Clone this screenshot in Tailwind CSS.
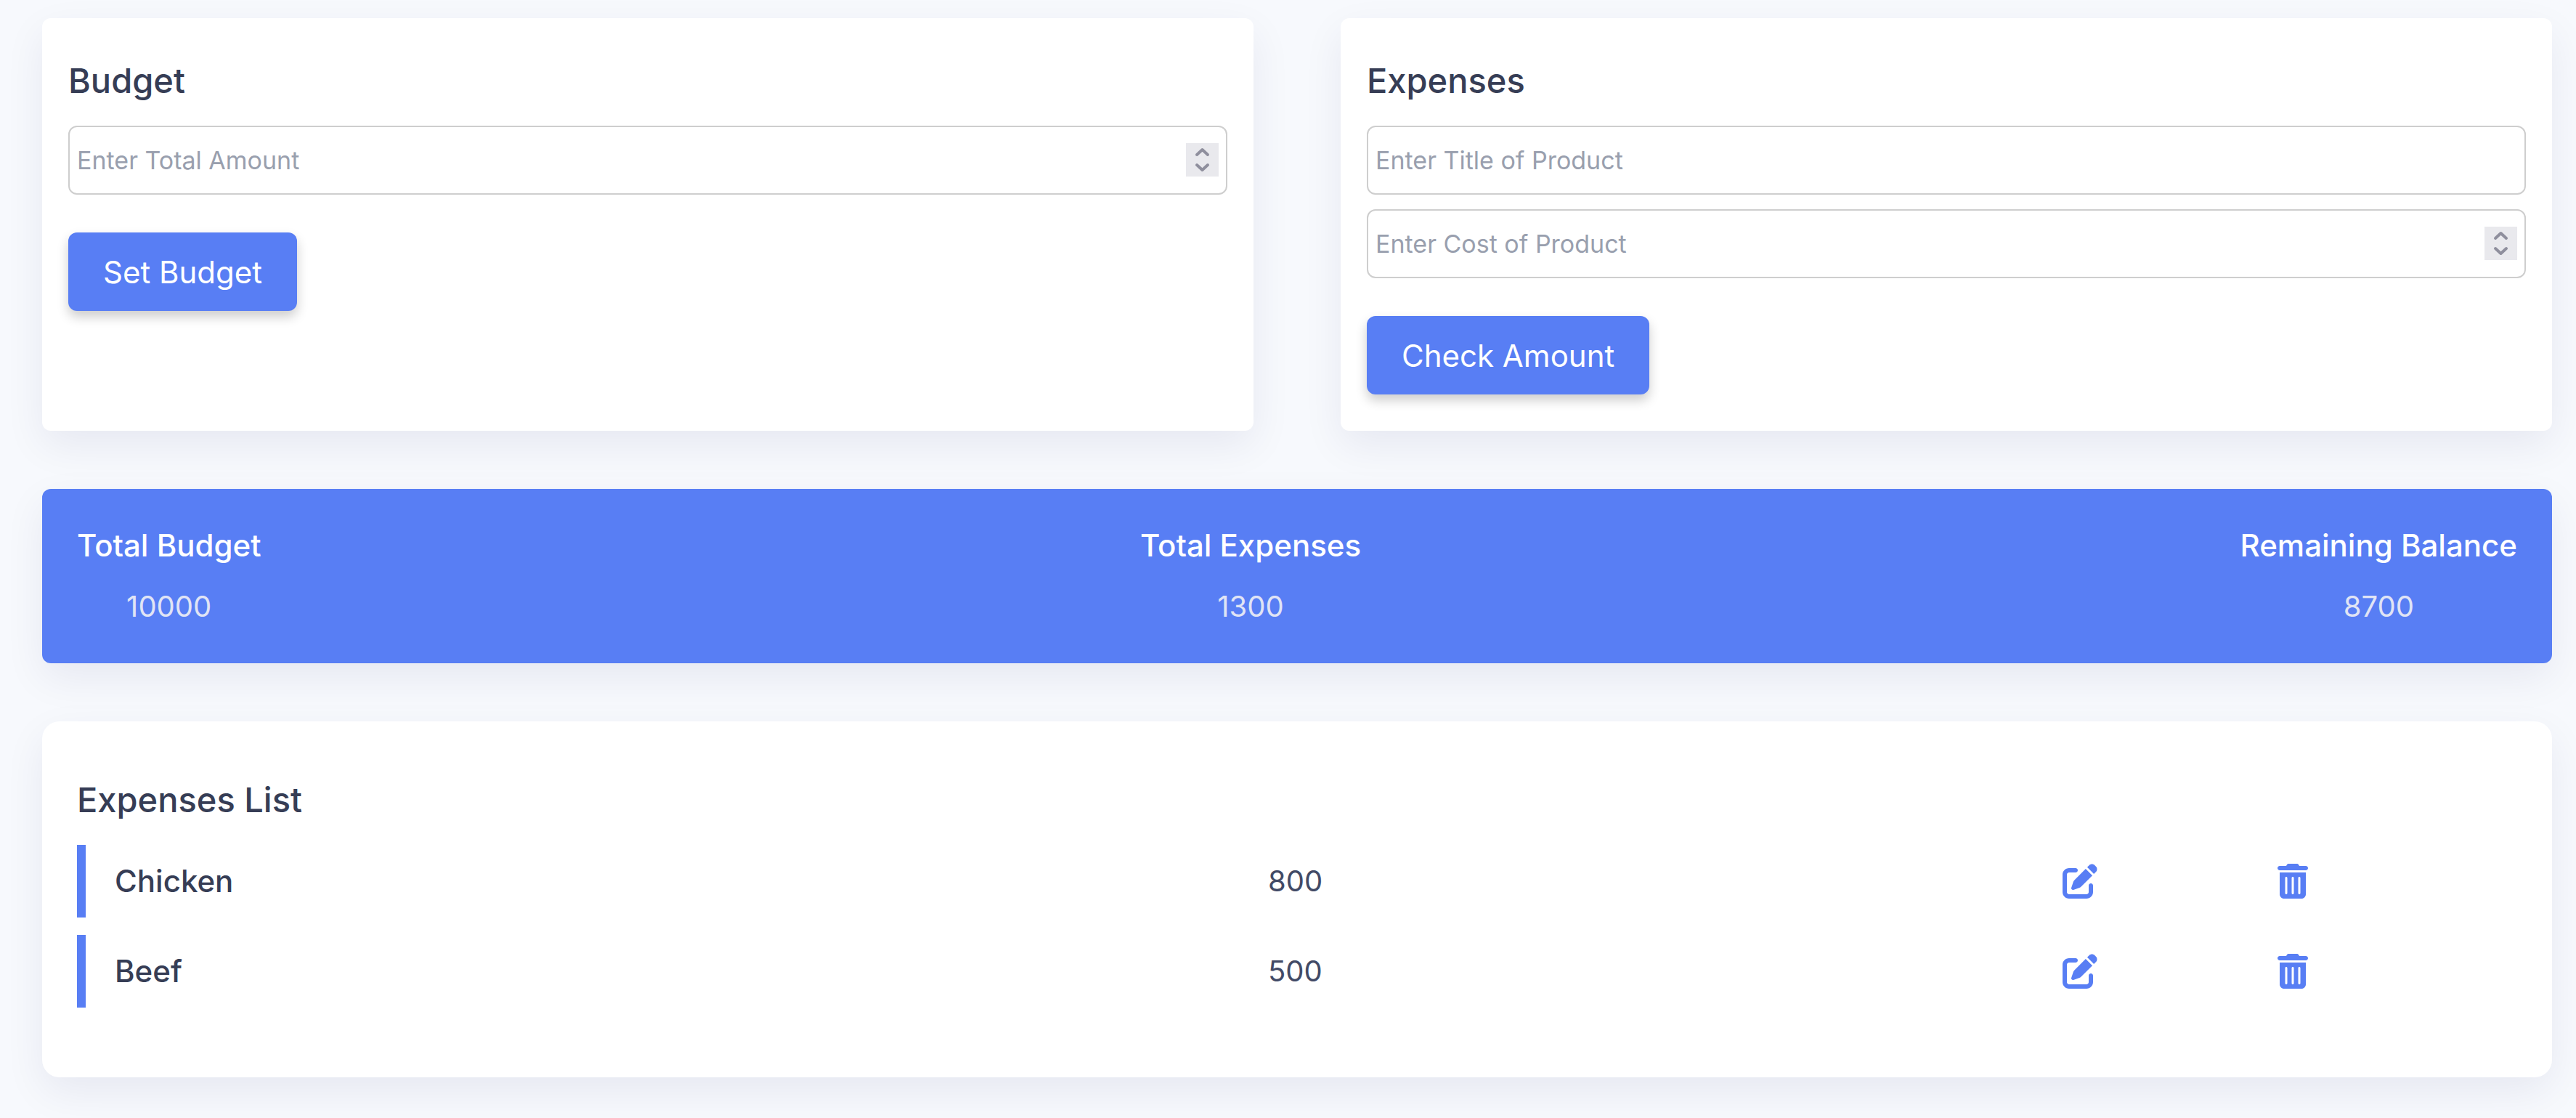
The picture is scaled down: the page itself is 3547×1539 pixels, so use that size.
<!DOCTYPE html>
<html lang="en">
<head>
<meta charset="utf-8">
<meta name="viewport" content="width=device-width, initial-scale=1">
<title>Budget App</title>
<script src="https://cdn.jsdelivr.net/npm/@tailwindcss/browser@4"></script>
</head>
<body class="min-h-screen bg-[#f7f9fd] font-['Inter',sans-serif] text-[#363d55]">
<svg class="hidden" aria-hidden="true">
  <symbol id="edit" viewBox="0 0 512 512"><path fill="currentColor" d="M471.6 21.7c-21.9-21.9-57.3-21.9-79.2 0L362.3 51.7l97.9 97.9 30.1-30.1c21.9-21.9 21.9-57.3 0-79.2L471.6 21.7zm-299.2 220c-6.1 6.1-10.8 13.6-13.5 21.9l-29.6 88.8c-2.9 8.6-.6 18.1 5.8 24.6s15.9 8.7 24.6 5.8l88.8-29.6c8.2-2.7 15.7-7.4 21.9-13.5L437.7 172.3 339.7 74.3 172.4 241.7zM96 64C43 64 0 107 0 160V416c0 53 43 96 96 96H352c53 0 96-43 96-96V320c0-17.7-14.3-32-32-32s-32 14.3-32 32v96c0 17.7-14.3 32-32 32H96c-17.7 0-32-14.3-32-32V160c0-17.7 14.3-32 32-32h96c17.7 0 32-14.3 32-32s-14.3-32-32-32H96z"/></symbol>
  <symbol id="trash" viewBox="0 0 448 512"><path fill="currentColor" d="M135.2 17.7L128 32H32C14.3 32 0 46.3 0 64S14.3 96 32 96H416c17.7 0 32-14.3 32-32s-14.3-32-32-32H320l-7.2-14.3C307.4 6.8 296.3 0 284.2 0H163.8c-12.1 0-23.2 6.8-28.6 17.7zM32 128V448c0 35.3 28.7 64 64 64H352c35.3 0 64-28.7 64-64V128H32zm96 64c8.8 0 16 7.2 16 16V432c0 8.8-7.2 16-16 16s-16-7.2-16-16V208c0-8.8 7.2-16 16-16zm96 0c8.8 0 16 7.2 16 16V432c0 8.8-7.2 16-16 16s-16-7.2-16-16V208c0-8.8 7.2-16 16-16zm96 0c8.8 0 16 7.2 16 16V432c0 8.8-7.2 16-16 16s-16-7.2-16-16V208c0-8.8 7.2-16 16-16z"/></symbol>
  <symbol id="stepper" viewBox="0 0 45 46"><path fill="none" stroke="#8f8f9d" stroke-width="4" stroke-linecap="round" stroke-linejoin="round" d="M15 16l7.500-7 7.500 7M15 30l7.500 7 7.500-7"/></symbol>
</svg>
<main class="flex flex-col gap-20 pt-[25px] pr-[33px] pb-14 pl-[58px]">
  <div class="grid grid-cols-2 gap-[120px]">
    <form class="rounded-xl bg-white px-9 py-[50px] shadow-[0_20px_56px_rgba(20,20,80,0.07)]">
      <h2 class="mb-[26px] text-[47px] leading-[72px] font-medium">Budget</h2>
      <div class="relative">
        <input type="number" aria-label="Total amount" placeholder="Enter Total Amount" class="block h-[95px] w-full appearance-none [appearance:textfield] rounded-xl border-2 border-[#cecece] bg-white px-[10px] text-[34px] placeholder:text-[#999fae]">
        <svg class="absolute top-6 right-3 h-[46px] w-[45px] bg-[#e9e9ed]" aria-hidden="true"><use href="#stepper"/></svg>
      </div>
      <button type="button" class="mt-[52px] h-[108px] rounded-xl bg-[#587ef4] px-12 text-[42px] text-white shadow-[0_8px_16px_rgba(0,0,0,0.2)]">Set Budget</button>
    </form>
    <form class="rounded-xl bg-white px-9 py-[50px] shadow-[0_20px_56px_rgba(20,20,80,0.07)]">
      <h2 class="mb-[26px] text-[47px] leading-[72px] font-medium">Expenses</h2>
      <input type="text" aria-label="Title of product" placeholder="Enter Title of Product" class="mb-5 block h-[95px] w-full rounded-xl border-2 border-[#cecece] bg-white px-[10px] text-[34px] placeholder:text-[#999fae]">
      <div class="relative">
        <input type="number" aria-label="Cost of product" placeholder="Enter Cost of Product" class="block h-[95px] w-full appearance-none [appearance:textfield] rounded-xl border-2 border-[#cecece] bg-white px-[10px] text-[34px] placeholder:text-[#999fae]">
        <svg class="absolute top-6 right-3 h-[46px] w-[45px] bg-[#e9e9ed]" aria-hidden="true"><use href="#stepper"/></svg>
      </div>
      <button type="button" class="mt-[52px] h-[108px] rounded-xl bg-[#587ef4] px-12 text-[42px] text-white shadow-[0_8px_16px_rgba(0,0,0,0.2)]">Check Amount</button>
    </form>
  </div>

  <dl class="flex justify-between rounded-xl bg-[#587ef4] p-12 text-center text-[40px] leading-[60px] shadow-[0_20px_56px_rgba(20,20,80,0.07)]">
    <div class="flex flex-col gap-6"><dt class="text-[42px] font-medium text-white">Total Budget</dt><dd class="text-[#e0e4f5]">10000</dd></div>
    <div class="flex flex-col gap-6"><dt class="text-[42px] font-medium text-white">Total Expenses</dt><dd class="text-[#e0e4f5]">1300</dd></div>
    <div class="flex flex-col gap-6"><dt class="text-[42px] font-medium text-white">Remaining Balance</dt><dd class="text-[#e0e4f5]">8700</dd></div>
  </dl>

  <section class="rounded-3xl bg-white px-12 pt-[72px] pb-24 shadow-[0_20px_56px_rgba(20,20,80,0.07)]">
    <h2 class="mb-[26px] text-[47px] leading-[72px] font-medium">Expenses List</h2>
    <ul class="flex flex-col gap-6 text-[40px] leading-[60px]">
      <li class="grid h-[100px] grid-cols-[1592fr_1094fr_296fr_330fr] items-center border-l-12 border-[#587ef4] pl-9">
        <span class="pl-1 text-[42px] font-medium">Chicken</span>
        <span class="text-[#424a66]">800</span>
        <button type="button" aria-label="Edit Chicken" class="w-12 text-[#587ef4]"><svg class="size-12"><use href="#edit"/></svg></button>
        <button type="button" aria-label="Delete Chicken" class="w-[42px] text-[#587ef4]"><svg class="h-12 w-[42px]"><use href="#trash"/></svg></button>
      </li>
      <li class="grid h-[100px] grid-cols-[1592fr_1094fr_296fr_330fr] items-center border-l-12 border-[#587ef4] pl-9">
        <span class="pl-1 text-[42px] font-medium">Beef</span>
        <span class="text-[#424a66]">500</span>
        <button type="button" aria-label="Edit Beef" class="w-12 text-[#587ef4]"><svg class="size-12"><use href="#edit"/></svg></button>
        <button type="button" aria-label="Delete Beef" class="w-[42px] text-[#587ef4]"><svg class="h-12 w-[42px]"><use href="#trash"/></svg></button>
      </li>
    </ul>
  </section>
</main>
</body>
</html>
